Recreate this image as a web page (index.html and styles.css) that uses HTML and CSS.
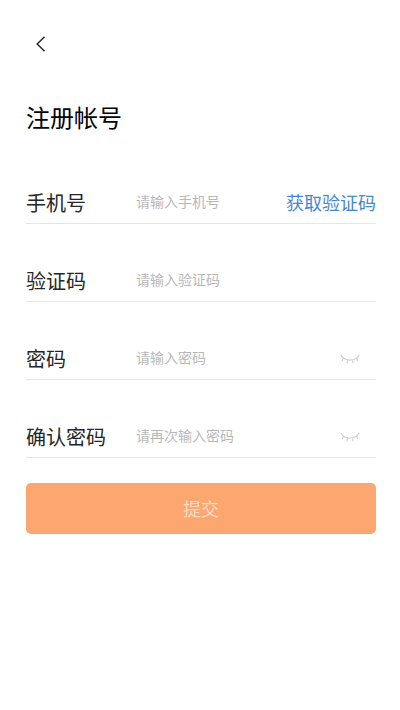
FILE: index.html
```html
<!DOCTYPE html>
<html lang="zh-CN">
<head>
<meta charset="utf-8">
<meta name="viewport" content="width=device-width, initial-scale=1">
<title>注册帐号</title>
<link rel="stylesheet" href="styles.css">
</head>
<body>
<main class="page">
  <header class="topbar">
    <button class="back" type="button" aria-label="返回">
      <svg class="back-icon" viewBox="0 0 10 16" aria-hidden="true"><path d="M8.5 0.8 1.2 8l7.3 7.2"/></svg>
    </button>
  </header>
  <h1 class="title">注册帐号</h1>
  <form class="form">
    <div class="field">
      <label class="label" for="phone">手机号</label>
      <input class="input" id="phone" type="tel" placeholder="请输入手机号">
      <button class="code" type="button">获取验证码</button>
    </div>
    <div class="field">
      <label class="label" for="code">验证码</label>
      <input class="input" id="code" type="text" placeholder="请输入验证码">
    </div>
    <div class="field">
      <label class="label" for="password">密码</label>
      <input class="input" id="password" type="password" placeholder="请输入密码">
      <button class="eye" type="button" aria-label="显示密码">
        <svg class="eye-icon" viewBox="0 0 20 10" aria-hidden="true"><path d="M0.800 0.800c2 3.700 5.300 5.400 9.200 5.400s7.200-1.700 9.200-5.400M3.400 3.900 2.200 7M7.600 6 7 9.400M12.400 6 13 9.400M16.600 3.900l1.200 3.100"/></svg>
      </button>
    </div>
    <div class="field">
      <label class="label" for="confirm">确认密码</label>
      <input class="input" id="confirm" type="password" placeholder="请再次输入密码">
      <button class="eye" type="button" aria-label="显示确认密码">
        <svg class="eye-icon" viewBox="0 0 20 10" aria-hidden="true"><path d="M0.800 0.800c2 3.700 5.300 5.400 9.200 5.400s7.200-1.700 9.200-5.400M3.400 3.900 2.200 7M7.600 6 7 9.400M12.400 6 13 9.400M16.600 3.900l1.200 3.100"/></svg>
      </button>
    </div>
    <button class="submit" type="submit">提交</button>
  </form>
</main>
</body>
</html>
```

FILE: styles.css
```css
* {
  box-sizing: border-box;
}

body {
  margin: 0;
  background: #fff;
  color: #262626;
  font-family: "Noto Sans CJK SC", sans-serif;
}

button,
input {
  margin: 0;
  padding: 0;
  border: 0;
  background: none;
  font-family: inherit;
}

.page {
  padding: 28px 24px 24px 26px;
}

.topbar {
  display: flex;
}

.back {
  display: flex;
  align-items: center;
  justify-content: center;
  width: 30px;
  height: 32px;
}

.back-icon {
  width: 10px;
  height: 16px;
  fill: none;
  stroke: #222;
  stroke-width: 1.4;
}

.title {
  margin: 39px 0 0;
  color: #000;
  font-size: 24px;
  font-weight: 400;
  line-height: 36px;
}

.form {
  display: flex;
  flex-direction: column;
  padding-top: 11px;
}

.field {
  display: flex;
  align-items: center;
  height: 78px;
  padding-top: 36px;
  border-bottom: 1px solid #e6e6e6;
}

.label {
  width: 110px;
  font-size: 20px;
  line-height: 30px;
}

.input {
  flex: 1;
  min-width: 0;
  height: 30px;
  padding-bottom: 3px;
  color: #262626;
  font-size: 14px;
  outline: none;
}

.input::placeholder {
  color: #b8b8b8;
  opacity: 1;
}

.code {
  padding-bottom: 2px;
  color: #4488d4;
  font-size: 18px;
  line-height: 30px;
}

.eye {
  display: flex;
  padding: 4px 16px;
}

.eye-icon {
  width: 20px;
  height: 10px;
  fill: none;
  stroke: #cfcfcf;
  stroke-width: 1.2;
}

.submit {
  height: 51px;
  margin-top: 25px;
  padding-bottom: 2px;
  border-radius: 5px;
  background: #fca76f;
  color: #fddcc6;
  font-size: 18px;
}
```
